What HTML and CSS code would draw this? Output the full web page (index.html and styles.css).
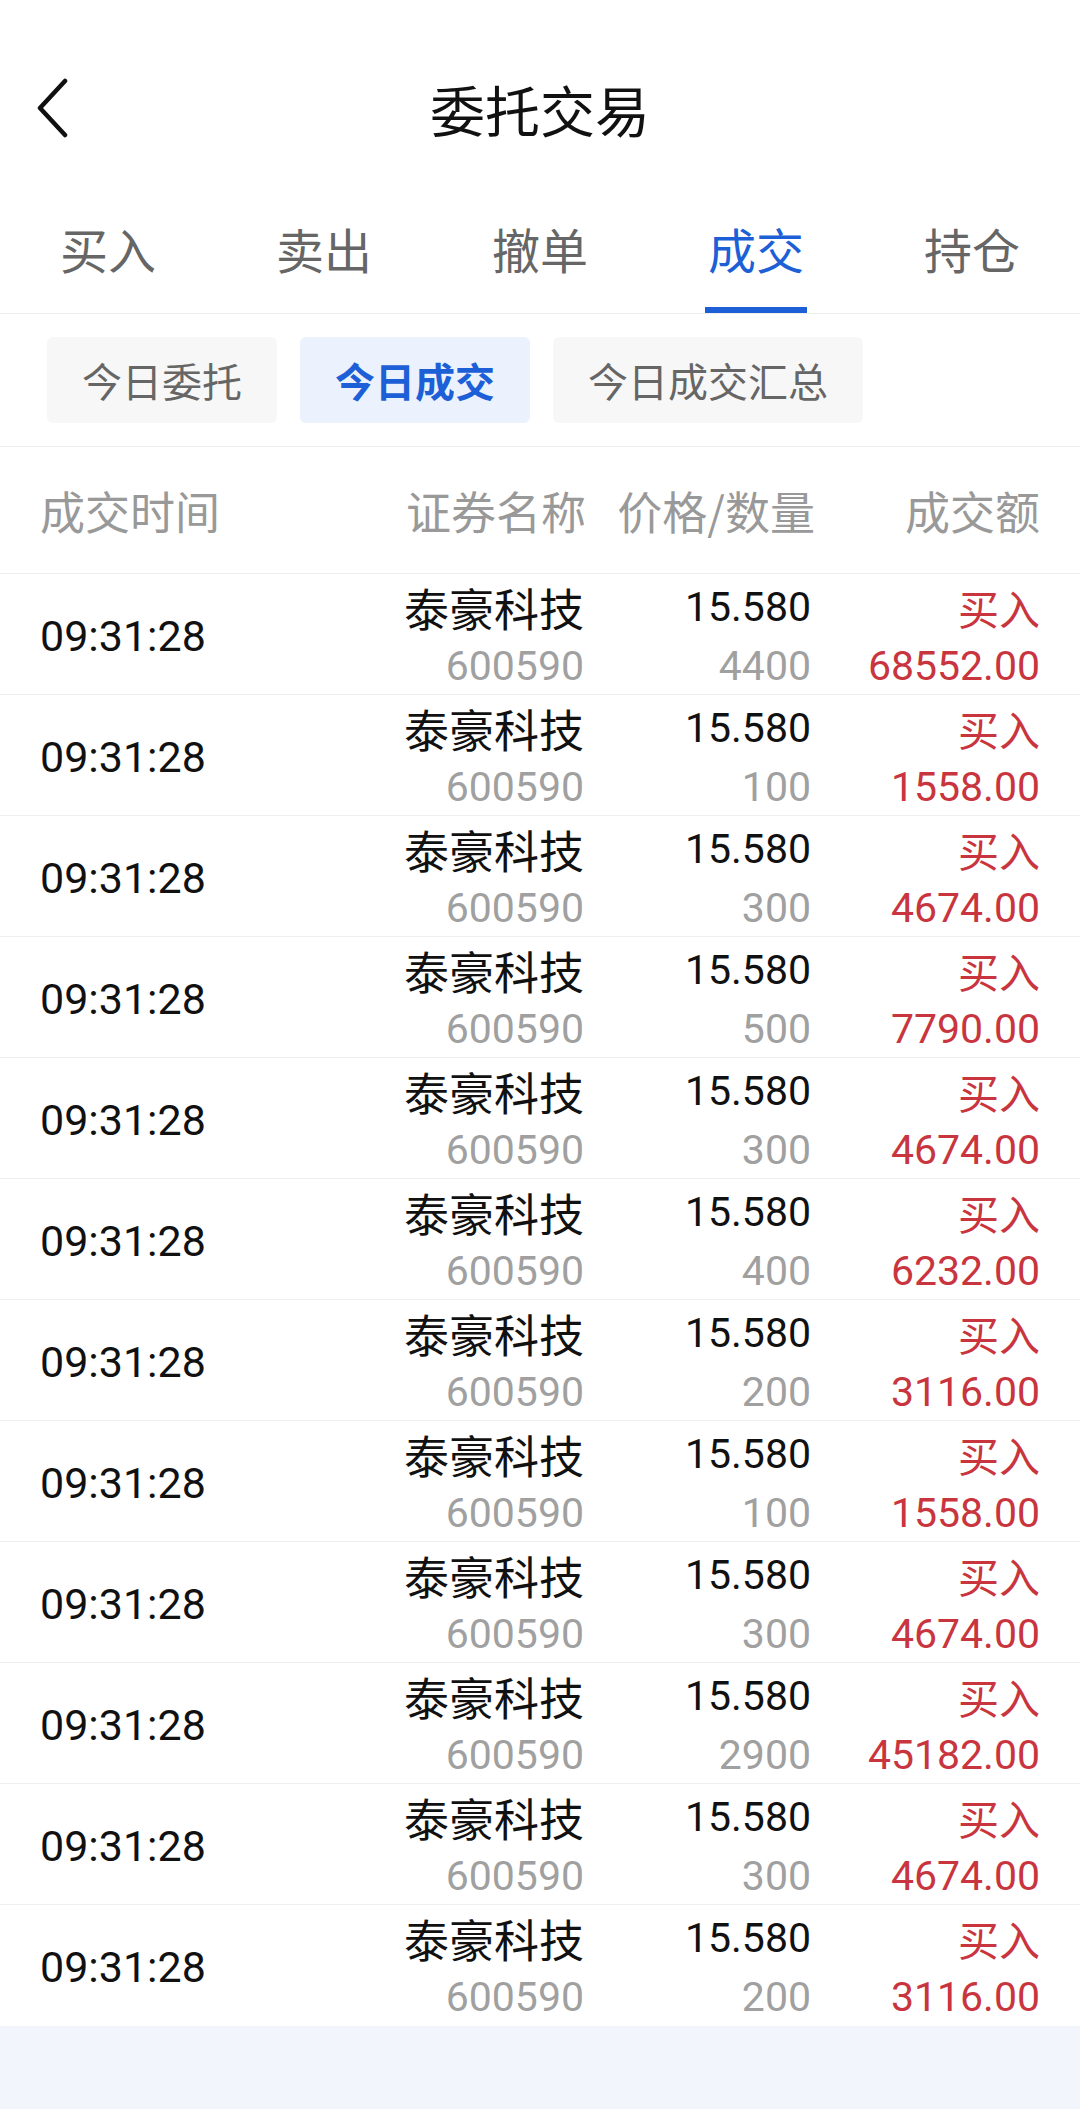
FILE: index.html
```html
<!DOCTYPE html>
<html lang="zh-CN">
<head>
<meta charset="utf-8">
<title>委托交易</title>
<link rel="stylesheet" href="styles.css">
</head>
<body>
<div class="page">
  <header class="navbar">
    <div class="nav-left">
      <svg class="back" width="34" height="60" viewBox="0 0 34 60">
        <polyline points="29,3 4,30 29,57" fill="none" stroke="#111" stroke-width="4.5" stroke-linecap="round" stroke-linejoin="round"/>
      </svg>
    </div>
    <div class="nav-title">委托交易</div>
    <div class="nav-right"></div>
  </header>

  <nav class="tabs">
    <div class="tab">买入</div>
    <div class="tab">卖出</div>
    <div class="tab">撤单</div>
    <div class="tab active"><span class="tab-label">成交</span></div>
    <div class="tab">持仓</div>
  </nav>

  <div class="subtabs">
    <div class="chip">今日委托</div>
    <div class="chip active">今日成交</div>
    <div class="chip">今日成交汇总</div>
  </div>

  <div class="thead">
    <div class="c1">成交时间</div>
    <div class="c2">证券名称</div>
    <div class="c3">价格/数量</div>
    <div class="c4">成交额</div>
  </div>

  <div class="tbody">
    <div class="row"><div class="c1 time">09:31:28</div><div class="c2"><div class="l1">泰豪科技</div><div class="l2 sub">600590</div></div><div class="c3"><div class="l1">15.580</div><div class="l2 sub">4400</div></div><div class="c4 red"><div class="l1">买入</div><div class="l2">68552.00</div></div></div>
    <div class="row"><div class="c1 time">09:31:28</div><div class="c2"><div class="l1">泰豪科技</div><div class="l2 sub">600590</div></div><div class="c3"><div class="l1">15.580</div><div class="l2 sub">100</div></div><div class="c4 red"><div class="l1">买入</div><div class="l2">1558.00</div></div></div>
    <div class="row"><div class="c1 time">09:31:28</div><div class="c2"><div class="l1">泰豪科技</div><div class="l2 sub">600590</div></div><div class="c3"><div class="l1">15.580</div><div class="l2 sub">300</div></div><div class="c4 red"><div class="l1">买入</div><div class="l2">4674.00</div></div></div>
    <div class="row"><div class="c1 time">09:31:28</div><div class="c2"><div class="l1">泰豪科技</div><div class="l2 sub">600590</div></div><div class="c3"><div class="l1">15.580</div><div class="l2 sub">500</div></div><div class="c4 red"><div class="l1">买入</div><div class="l2">7790.00</div></div></div>
    <div class="row"><div class="c1 time">09:31:28</div><div class="c2"><div class="l1">泰豪科技</div><div class="l2 sub">600590</div></div><div class="c3"><div class="l1">15.580</div><div class="l2 sub">300</div></div><div class="c4 red"><div class="l1">买入</div><div class="l2">4674.00</div></div></div>
    <div class="row"><div class="c1 time">09:31:28</div><div class="c2"><div class="l1">泰豪科技</div><div class="l2 sub">600590</div></div><div class="c3"><div class="l1">15.580</div><div class="l2 sub">400</div></div><div class="c4 red"><div class="l1">买入</div><div class="l2">6232.00</div></div></div>
    <div class="row"><div class="c1 time">09:31:28</div><div class="c2"><div class="l1">泰豪科技</div><div class="l2 sub">600590</div></div><div class="c3"><div class="l1">15.580</div><div class="l2 sub">200</div></div><div class="c4 red"><div class="l1">买入</div><div class="l2">3116.00</div></div></div>
    <div class="row"><div class="c1 time">09:31:28</div><div class="c2"><div class="l1">泰豪科技</div><div class="l2 sub">600590</div></div><div class="c3"><div class="l1">15.580</div><div class="l2 sub">100</div></div><div class="c4 red"><div class="l1">买入</div><div class="l2">1558.00</div></div></div>
    <div class="row"><div class="c1 time">09:31:28</div><div class="c2"><div class="l1">泰豪科技</div><div class="l2 sub">600590</div></div><div class="c3"><div class="l1">15.580</div><div class="l2 sub">300</div></div><div class="c4 red"><div class="l1">买入</div><div class="l2">4674.00</div></div></div>
    <div class="row"><div class="c1 time">09:31:28</div><div class="c2"><div class="l1">泰豪科技</div><div class="l2 sub">600590</div></div><div class="c3"><div class="l1">15.580</div><div class="l2 sub">2900</div></div><div class="c4 red"><div class="l1">买入</div><div class="l2">45182.00</div></div></div>
    <div class="row"><div class="c1 time">09:31:28</div><div class="c2"><div class="l1">泰豪科技</div><div class="l2 sub">600590</div></div><div class="c3"><div class="l1">15.580</div><div class="l2 sub">300</div></div><div class="c4 red"><div class="l1">买入</div><div class="l2">4674.00</div></div></div>
    <div class="row last"><div class="c1 time">09:31:28</div><div class="c2"><div class="l1">泰豪科技</div><div class="l2 sub">600590</div></div><div class="c3"><div class="l1">15.580</div><div class="l2 sub">200</div></div><div class="c4 red"><div class="l1">买入</div><div class="l2">3116.00</div></div></div>
  </div>
</div>
</body>
</html>
```
FILE: styles.css
```css
* { box-sizing: border-box; }
html, body {
  margin: 0;
  padding: 0;
  background: #f2f5fc;
}
body {
  font-family: Roboto, "Noto Sans CJK SC", sans-serif;
  color: #111;
  width: 1080px;
  min-height: 2109px;
}
.page {
  background: #fff;
}

/* nav bar */
.navbar {
  height: 190px;
  padding-top: 26px;
  display: grid;
  grid-template-columns: 1fr auto 1fr;
  align-items: center;
}
.nav-left {
  padding-left: 36px;
  height: 164px;
  display: flex;
  align-items: center;
}
.back { display: block; }
.nav-title {
  font-family: "Noto Sans CJK SC", sans-serif;
  font-size: 55px;
  font-weight: 400;
  line-height: 164px;
  color: #111;
}

/* main tabs */
.tabs {
  display: flex;
  height: 124px;
  border-bottom: 1px solid #eeeeee;
}
.tab {
  flex: 1;
  display: flex;
  justify-content: center;
  font-family: "Noto Sans CJK SC", sans-serif;
  font-size: 48px;
  line-height: 116px;
  color: #666;
}
.tab.active { color: #1d5fd6; }
.tab-label {
  position: relative;
  display: block;
  height: 123px;
}
.tab-label::after {
  content: "";
  position: absolute;
  left: -3px;
  right: -3px;
  bottom: 0;
  height: 6px;
  background: #1d5fd6;
}

/* sub tabs */
.subtabs {
  display: flex;
  gap: 23px;
  padding: 23px 0 23px 47px;
  border-bottom: 1px solid #eeeeee;
}
.chip {
  height: 86px;
  line-height: 86px;
  padding: 0 35px;
  border-radius: 6px;
  background: #f7f7f7;
  color: #666;
  font-family: "Noto Sans CJK SC", sans-serif;
  font-size: 40px;
}
.chip.active {
  background: #ebf1fd;
  color: #1d5fd6;
  font-weight: 700;
}

/* table */
.thead, .row {
  display: grid;
  grid-template-columns: 300px 244px 227px 229px;
  padding: 0 40px;
}
.thead {
  height: 127px;
  align-items: center;
  border-bottom: 1px solid #eeeeee;
  color: #999;
  font-family: "Noto Sans CJK SC", sans-serif;
  font-size: 45px;
}
.thead .c2, .thead .c3, .thead .c4 { text-align: right; }
.thead .c2 { margin-right: -2px; }
.thead .c3 { margin-right: -4px; }

.row {
  height: 121px;
  border-bottom: 1px solid #eeeeee;
  padding-top: 5px;
}
.row.last { border-bottom: none; }
.row .c2, .row .c3, .row .c4 { text-align: right; }
.time {
  align-self: center;
  margin-top: -2px;
  font-size: 43px;
  color: #111;
}
.l1, .l2 {
  height: 57px;
  line-height: 57px;
  font-size: 41px;
  white-space: nowrap;
}
.l2 { line-height: 60px; }
.c2 .l1 {
  font-family: "Noto Sans CJK SC", sans-serif;
  font-size: 45px;
  color: #111;
}
.c3 .l1 { color: #111; }
.sub { color: #a0a0a0; }
.red { color: #c9353e; }
.c4 .l1 {
  font-family: "Noto Sans CJK SC", sans-serif;
}
```
